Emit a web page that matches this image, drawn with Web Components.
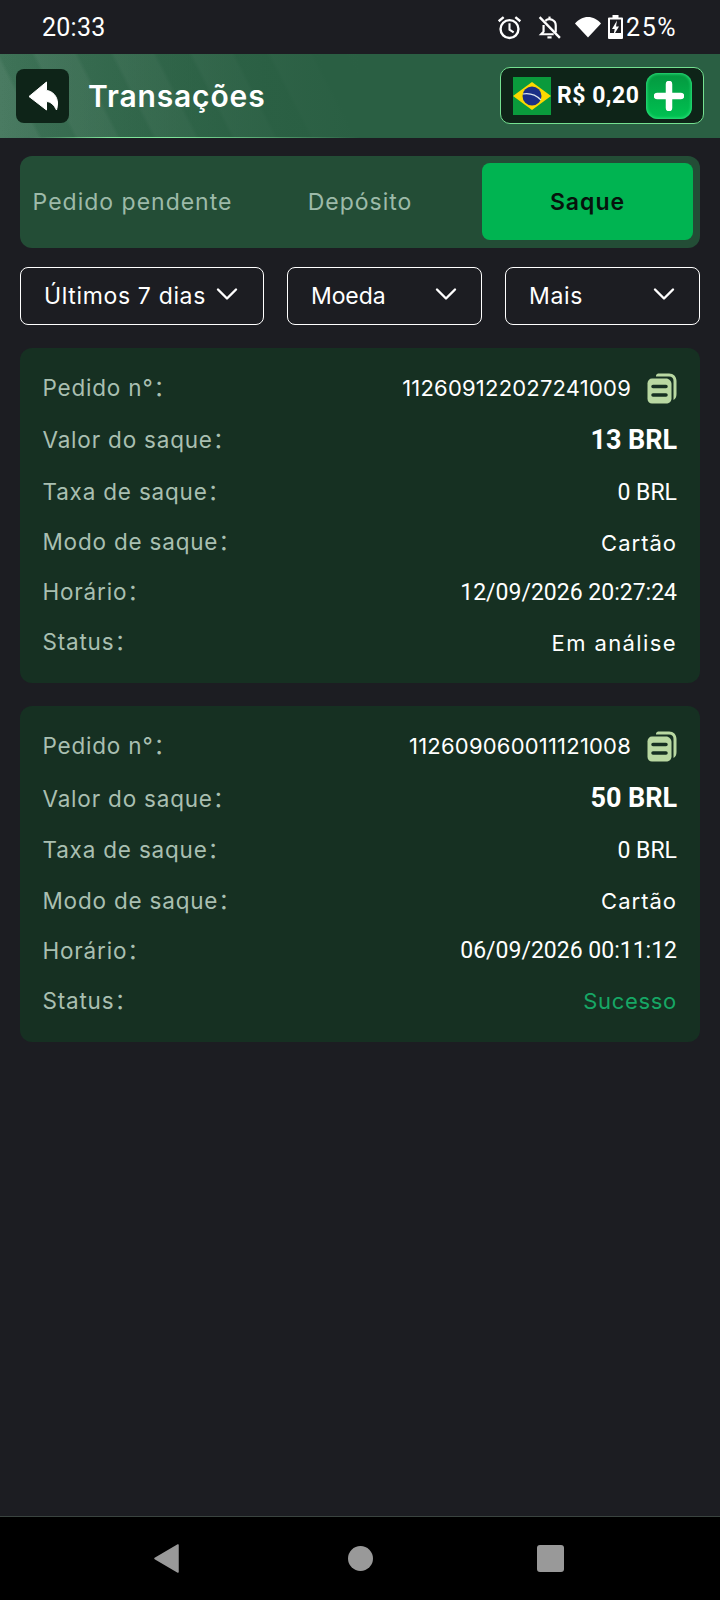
<!DOCTYPE html>
<html lang="pt-BR"><head><meta charset="utf-8"><title>Transações</title>
<style>
html,body{margin:0;padding:0;background:#1c1d22;}
body{width:720px;height:1600px;display:flex;flex-direction:column;overflow:hidden;font-family:Inter,"Liberation Sans",sans-serif;color:#fff;}
</style></head><body>
<status-bar></status-bar>
<app-header></app-header>
<main-content>
  <tab-bar></tab-bar>
  <filter-row></filter-row>
  <tx-card order="112609122027241009" amount="13 BRL" time="12/09/2026 20:27:24" status="Em análise"></tx-card>
  <tx-card order="112609060011121008" amount="50 BRL" time="06/09/2026 00:11:12" status="Sucesso" ok></tx-card>
</main-content>
<nav-bar></nav-bar>
<script>
const def=(name,html)=>customElements.define(name,class extends HTMLElement{
  constructor(){super();this.attachShadow({mode:'open'}).innerHTML=typeof html==='function'?html(this):html;}
});
const chev=`<svg width="22" height="14" viewBox="0 0 22 14" fill="none" stroke="#fff" stroke-width="2.4" stroke-linecap="round" stroke-linejoin="round"><path d="M2 2.500 11 11.500 20 2.500"/></svg>`;
def('main-content','<style>:host{display:block;flex:1}</style><slot></slot>');
def('status-bar',`<style>
:host{display:flex;align-items:center;height:54px;padding:0 43px 0 42px;box-sizing:border-box;font:400 25px/1 Roboto,sans-serif;color:#fff;}
.t{flex:1;letter-spacing:.25px}
svg{display:block}
.i{display:flex;align-items:center}
.p{letter-spacing:1.5px}
</style>
<span class="t">20:33</span>
<div class="i">
<svg width="25" height="25" viewBox="0 0 24 24" fill="none" stroke="#fff" stroke-width="2.3" style="margin-right:15px"><circle cx="12" cy="13.500" r="8.600"/><path d="M12 8v6l4 2.600" stroke-width="2"/><path d="M1.600 6 6.400 2M22.400 6 17.600 2" stroke-width="2.300"/></svg>
<svg width="25" height="25" viewBox="0 0 24 24" fill="none" stroke="#fff" stroke-width="2.100" style="margin-right:12px"><path d="M8 5.600A6 6 0 0 1 18 10v6.500M16 18.500H4l2.300-2.500V9.500"/><path d="M10 21.500h4"/><path d="M12 1.500v2"/><path d="M2.500 2 22 22" stroke-width="2.300"/></svg>
<svg width="28" height="22" viewBox="0 0 28 22" style="margin-right:6px"><path d="M14 21.500 1 7.500C4.500 3.500 9 1 14 1s9.500 2.500 13 6.500z" fill="#fff"/></svg>
<svg width="15" height="24" viewBox="0 0 15 24" style="margin-right:3px"><path fill-rule="evenodd" d="M4.500 0h6v2.500H14a1 1 0 0 1 1 1V23a1 1 0 0 1-1 1H1a1 1 0 0 1-1-1V3.500a1 1 0 0 1 1-1h3.500zM2 4.500V22h11V4.500z" fill="#fff"/><path d="M2 18h11v4H2z" fill="#fff"/><path d="M9 5.500 4 14h2.700l-1.200 6.500L11 11.500H8z" fill="#fff"/></svg>
<span class="p">25%</span>
</div>`);

def('app-header',`<style>
:host{display:flex;align-items:center;justify-content:space-between;height:84px;box-sizing:border-box;padding:0 16px 1px 16px;position:relative;
background:
 linear-gradient(90deg,rgba(42,95,67,0) 0,rgba(42,95,67,.6) 30%,#2a5f43 50%),
 repeating-linear-gradient(63deg,rgba(255,255,255,.06) 0 34px,rgba(255,255,255,0) 38px 66px,rgba(255,255,255,.06) 70px),
 linear-gradient(90deg,#3f7358,#2a5f43 45%);}
:host::after{content:"";position:absolute;left:0;right:0;bottom:0;height:1px;background:linear-gradient(90deg,transparent 4%,#7fe59a 15%,#7fe59a 24%,transparent 50%);}
.l{display:flex;align-items:center;gap:19px}
.b{width:53px;height:54px;border-radius:8px;background:#0e2418;display:flex;align-items:center;justify-content:center}
h1{margin:0;font:600 30px/1 Inter,sans-serif;letter-spacing:.85px;color:#fff}
.w{display:flex;align-items:center;width:204px;height:57px;box-sizing:border-box;border:1px solid #74e090;border-radius:10px;background:#0e2418;padding:0 11px 0 12px;}
.a{font:700 23px/1 Roboto,sans-serif;letter-spacing:.5px;margin-left:6px;flex:1;white-space:nowrap}
.p{width:46px;height:46px;border-radius:12px;background:linear-gradient(180deg,#04973f,#00c352);box-shadow:inset 0 0 3px 1px #2de07c;display:flex;align-items:center;justify-content:center}
svg{display:block}
</style>
<div class="l"><div class="b"><svg width="32" height="30" viewBox="0 0 32 30"><path d="M19.500 1 2 15.500 19.500 29V20.500C24 20.800 27 24 29.500 29 30 27 30.500 25 30.500 22 30.500 15 25 9.800 19.500 9.500z" fill="#fff" stroke="#fff" stroke-linejoin="round"/></svg></div><h1>Transações</h1></div>
<div class="w">
<svg width="38" height="38" viewBox="0 0 38 38"><rect width="38" height="38" fill="#0a9a3c"/><path d="M19 5 38 19 19 33 0 19z" fill="#fbd800"/><circle cx="19" cy="19" r="9.500" fill="#1b2f86"/><path d="M10 17c6-1 13 1 18 6" stroke="#dfe6ee" stroke-width="1.200" fill="none"/></svg>
<span class="a">R$ 0,20</span>
<div class="p"><svg width="30" height="30" viewBox="0 0 30 30"><path d="M15 3v24M3 15h24" stroke="#fff" stroke-width="6.500" stroke-linecap="round"/></svg></div>
</div>`);

def('tab-bar',`<style>
:host{display:grid;grid-template-columns:repeat(3,211px);justify-content:space-between;align-items:center;margin:18px 20px 0;height:92px;box-sizing:border-box;padding:6px 7px 8px;border-radius:12px;background:#234d36;font:400 23px/1 Inter,sans-serif;letter-spacing:1px;color:#9dbaa9;text-align:center;}
span{white-space:nowrap;padding-top:2px}
.a{height:75px;border-radius:8px;background:#00b451;color:#06130c;font-weight:600;display:flex;align-items:center;justify-content:center}
</style>
<span>Pedido pendente</span><span>Depósito</span><span class="a">Saque</span>`);

def('filter-row',`<style>
:host{display:grid;grid-template-columns:244px 195px 195px;justify-content:space-between;margin:19px 20px 0;}
.s{height:58px;box-sizing:border-box;border:1px solid #fff;border-radius:8px;display:flex;align-items:center;justify-content:space-between;padding:0 24px 0 23px;font:400 23px/1 Inter,sans-serif;white-space:nowrap}
svg{display:block;margin-top:-4px}
</style>
<div class="s" style="padding-right:25px"><span style="letter-spacing:.65px">Últimos 7 dias</span>${chev}</div>
<div class="s"><span style="letter-spacing:-.1px">Moeda</span>${chev}</div>
<div class="s"><span style="letter-spacing:.7px">Mais</span>${chev}</div>`);

def('tx-card',el=>`<style>
:host{display:grid;grid-template-columns:auto 1fr;grid-template-rows:52.5px 52px 51px 50px 50px 50px;align-items:center;margin:23px 20px 0;height:335px;box-sizing:border-box;padding:14px 23px 0 22.5px;border-radius:12px;background:#163022;font:400 22.5px/1 Inter,"Noto Sans CJK SC",sans-serif;letter-spacing:.8px;color:#a9bfb1;}
:host([ok]){height:336px;grid-template-rows:52.5px 52.5px 51px 50px 49.5px 50.5px}
.v{color:#fff;white-space:nowrap;display:flex;justify-content:flex-end;align-items:center;gap:16px;font-size:22px}
.o{letter-spacing:.2px}
.r{font:400 23px/1 Roboto,sans-serif;letter-spacing:0}
.bold{font:700 27px/1 Roboto,sans-serif;letter-spacing:-.05px}
.ok{color:#16a765;letter-spacing:.7px}
svg{display:block}
</style>
<span>Pedido n°：</span><span class="v"><span class="o">${el.getAttribute('order')}</span><svg width="30" height="31" viewBox="0 0 30 31"><path d="M9 2.500 A2.500 2.500 0 0 1 11 0.500H22C26.500 0.500 29.500 3.500 29.500 8V21C29.500 24 28.500 26 26.500 27V8C26.500 5 25 3.500 22 3.500H9z" fill="#b9d8a2"/><path d="M5 5.500H19C22 5.500 24.500 8 24.500 11V25.500C24.500 28.500 22 30.500 19 30.500H5C2.500 30.500 .500 28.500 .500 26V10.500C.500 7.500 2.500 5.500 5 5.500z" fill="#b9d8a2"/><path d="M6 13.500H19M6 22H19" stroke="#163022" stroke-width="3.500" stroke-linecap="round"/></svg></span>
<span>Valor do saque：</span><span class="v bold">${el.getAttribute('amount')}</span>
<span>Taxa de saque：</span><span class="v r">0 BRL</span>
<span>Modo de saque：</span><span class="v" style="letter-spacing:1px">Cartão</span>
<span>Horário：</span><span class="v r">${el.getAttribute('time')}</span>
<span>Status：</span><span class="v ${el.hasAttribute('ok')?'ok':''}" ${el.hasAttribute('ok')?'':'style="letter-spacing:1.4px"'}>${el.getAttribute('status')}</span>`);

def('nav-bar',`<style>
:host{display:flex;align-items:center;height:84px;box-sizing:border-box;background:#000;border-top:1px solid #3a4440;padding:0 0 0 154px;}
svg{display:block}
</style>
<svg width="25" height="29" viewBox="0 0 25 29" style="margin-right:169px"><path d="M1 14.500 24 1V28z" fill="#999" stroke="#999" stroke-width="1.500" stroke-linejoin="round"/></svg>
<svg width="25" height="25" viewBox="0 0 25 25" style="margin-right:164px"><circle cx="12.500" cy="12.500" r="12.500" fill="#999"/></svg>
<svg width="27" height="27" viewBox="0 0 27 27"><rect width="27" height="27" rx="3" fill="#999"/></svg>`);
</script>
</body></html>
